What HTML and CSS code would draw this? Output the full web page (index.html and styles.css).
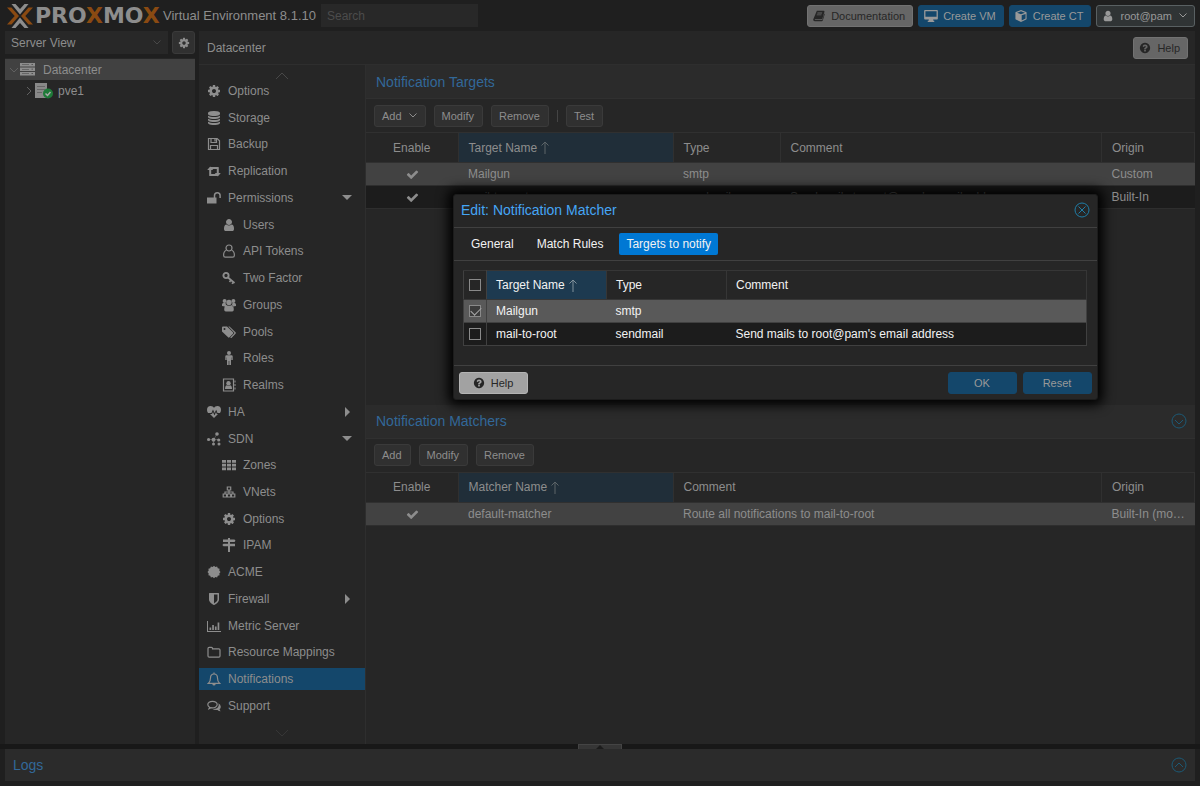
FILE: index.html
```html
<!DOCTYPE html>
<html lang="en">
<head>
    <meta charset="UTF-8">
    <meta name="viewport" content="width=device-width, initial-scale=1.0">
    <title>pve1 - Proxmox Virtual Environment</title>
    <link rel="stylesheet" href="styles.css">
</head>
<body>
    <svg class="sprite" aria-hidden="true">
        <symbol id="cog" viewBox="0 0 1792 1792"><path d="M1152 896q0-106-75-181t-181-75-181 75-75 181 75 181 181 75 181-75 75-181zm512-109v222q0 12-8 23t-20 13l-185 28q-19 54-39 91 35 50 107 138 10 12 10 25t-9 23q-27 37-99 108t-94 71q-12 0-26-9l-138-108q-44 23-91 38-16 136-29 186-7 28-36 28h-222q-14 0-24.5-8.5t-11.5-21.5l-28-184q-49-16-90-37l-141 107q-10 9-25 9-14 0-25-11-126-114-165-168-7-10-7-23 0-12 8-23 15-21 51-66.5t54-70.5q-27-50-41-99l-183-27q-13-2-21-12.5t-8-23.5v-222q0-12 8-23t19-13l186-28q14-46 39-92-40-57-107-138-10-12-10-24 0-10 9-23 26-36 98.5-107.5t94.5-71.5q13 0 26 10l138 107q44-23 91-38 16-136 29-186 7-28 36-28h222q14 0 24.5 8.5t11.5 21.5l28 184q49 16 90 37l142-107q9-9 24-9 13 0 25 10 129 119 165 170 7 8 7 22 0 12-8 23-15 21-51 66.5t-54 70.5q26 50 41 98l183 28q13 2 21 12.5t8 23.5z"/></symbol>
        <symbol id="check" viewBox="0 0 1792 1792"><path d="M1671 566q0 40-28 68l-724 724-136 136q-28 28-68 28t-68-28l-136-136-362-362q-28-28-28-68t28-68l136-136q28-28 68-28t68 28l294 295 656-657q28-28 68-28t68 28l136 136q28 28 28 68z"/></symbol>
        <symbol id="user" viewBox="0 0 1792 1792"><path d="M1536 1399q0 109-62.5 187t-150.5 78h-854q-88 0-150.5-78t-62.5-187q0-85 8.5-160.5t31.5-152 58.5-131 94-89 134.5-34.5q131 128 313 128t313-128q76 0 134.5 34.5t94 89 58.5 131 31.5 152 8.5 160.5zm-256-887q0 159-112.5 271.5t-271.5 112.5-271.5-112.5-112.5-271.5 112.5-271.5 271.5-112.5 271.5 112.5 112.5 271.5z"/></symbol>
        <symbol id="user-o" viewBox="0 0 14 14"><g fill="none" stroke="currentColor" stroke-width="1.2"><circle cx="7" cy="4" r="3"/><path d="M4.4 6.2C2.4 6.8 1.6 9 1.6 11.2c0 1.3.7 2 1.7 2h7.4c1 0 1.7-.7 1.7-2 0-2.200-.8-4.400-2.800-5"/></g></symbol>
        <symbol id="database" viewBox="0 0 1792 1792"><path d="M896 768q237 0 443-43t325-127v170q0 69-103 128t-280 93.500-385 34.500-385-34.500-280-93.500-103-128v-170q119 84 325 127t443 43zm0 768q237 0 443-43t325-127v170q0 69-103 128t-280 93.500-385 34.500-385-34.500-280-93.500-103-128v-170q119 84 325 127t443 43zm0-384q237 0 443-43t325-127v170q0 69-103 128t-280 93.500-385 34.500-385-34.500-280-93.500-103-128v-170q119 84 325 127t443 43zm0-1152q208 0 385 34.500t280 93.500 103 128v128q0 69-103 128t-280 93.500-385 34.500-385-34.500-280-93.500-103-128v-128q0-69 103-128t280-93.500 385-34.500z"/></symbol>
        <symbol id="shield" viewBox="0 0 1792 1792"><path d="M1344 960v-640h-448v1137q119-63 213-137 235-184 235-360zm192-768v768q0 86-33.500 170.500t-83 150-118 127.500-126.500 103-121 77.500-89.500 49.500-42.500 20q-12 6-26 6t-26-6q-16-7-42.500-20t-89.500-49.500-121-77.500-126.500-103-118-127.500-83-150-33.500-170.500v-768q0-26 19-45t45-19h1152q26 0 45 19t19 45z"/></symbol>
        <symbol id="help" viewBox="0 0 1792 1792"><path d="M1024 1376v-192q0-14-9-23t-23-9h-192q-14 0-23 9t-9 23v192q0 14 9 23t23 9h192q14 0 23-9t9-23zm256-672q0-88-55.500-163t-138.500-116-170-41q-243 0-371 213-15 24 8 42l132 100q7 6 19 6 16 0 25-12 53-68 86-92 34-24 86-24 48 0 85.500 26t37.500 59q0 38-20 61t-68 45q-63 28-115.500 86.500t-52.500 125.500v36q0 14 9 23t23 9h192q14 0 23-9t9-23q0-19 21.500-49.500t54.500-49.500q32-18 49-28.500t46-35 44.500-48 28-60.500 12.500-81zm384 192q0 209-103 385.500t-279.500 279.500-385.500 103-385.500-103-279.500-279.500-103-385.500 103-385.500 279.500-279.500 385.500-103 385.500 103 279.500 279.500 103 385.500z"/></symbol>
        <symbol id="save" viewBox="0 0 14 14"><path fill="none" stroke="currentColor" stroke-width="1.200" d="M1.500 1.500h8.700l2.300 2.300v8.700h-11zM4 1.500v4h5.500v-4M3.500 12.500v-4h7v4M8 2v2.500"/></symbol>
        <symbol id="retweet" viewBox="0 0 14 14"><path d="M3.200 2.500 6.200 6H4.200v4h4.600l1.600 2H2.700q-.5 0-.5-.5V6h-2zM10.800 12.500 7.800 9h2V5H5.200L3.600 3h7.700q.5 0 .5.500V9h2z"/></symbol>
        <symbol id="unlock" viewBox="0 0 14 14"><path d="M0 6.500h9.500v6H0z"/><path fill="none" stroke="currentColor" stroke-width="1.500" d="M7.500 7V4.500a2.800 2.800 0 0 1 5.600 0V7"/></symbol>
        <symbol id="key" viewBox="0 0 14 14"><circle cx="4" cy="4.500" r="2.600" fill="none" stroke="currentColor" stroke-width="1.900"/><path fill="none" stroke="currentColor" stroke-width="1.700" d="m6 6.500 6.500 5.500M9 9 7.500 11M11.500 11 10 12.800"/></symbol>
        <symbol id="group" viewBox="0 0 14 14"><circle cx="2.600" cy="3" r="2"/><circle cx="11.400" cy="3" r="2"/><circle cx="7" cy="4.500" r="2.700"/><path d="M0 8V6.500Q0 5 1.400 5h2.200q0 1.700 1 2.500L3 8.500zM14 8V6.500Q14 5 12.600 5h-2.200q0 1.700-1 2.500l1.600 1zM2.200 11.500q0-4.300 2.600-4.300 2.200 1.300 4.400 0 2.600 0 2.600 4.300 0 2-1.500 2H3.700q-1.500 0-1.500-2z"/></symbol>
        <symbol id="tags" viewBox="0 0 14 14"><path fill-rule="evenodd" d="M0 2.500Q0 1.500 1 1.500h4l6 5.800q.7.700 0 1.400l-3.500 3.600q-.7.700-1.400 0L0 6.500zM2.500 3a1 1 0 1 0 0 2 1 1 0 0 0 0-2z"/><path d="M6.300 1.500h1.200l6 5.800q.7.700 0 1.400l-3.800 4q-.8.600-1.500-.2l3.900-4.100q.4-.4 0-.8z"/></symbol>
        <symbol id="male" viewBox="0 0 14 14"><circle cx="7" cy="2" r="2"/><path d="M4.500 4.300h5q1.200 0 1.200 1.200V9H9.300V6.500H9V14H7.300v-4h-.6v4H5V6.500h-.3V9H3.300V5.500q0-1.200 1.200-1.200z"/></symbol>
        <symbol id="address" viewBox="0 0 14 14"><path fill="none" stroke="currentColor" stroke-width="1.200" d="M1.500 1h10v12h-10z"/><path d="M12.500 2.500h1v2h-1zM12.500 6h1v2h-1zM12.500 9.500h1v2h-1zM3 11q0-3.800 2-3.800 1.500 1 3 0 2 0 2 3.800z"/><circle cx="6.500" cy="5.300" r="2.200"/></symbol>
        <symbol id="heartbeat" viewBox="0 0 14 14"><path d="M7 13 3 9h2l1-2 1.500 3.500L9 7l.8 2H11zM0 5q0-4 3.700-4Q6 1 7 2.800 8 1 10.300 1 14 1 14 5q0 1.500-1 3h-2.500L9.200 4.700 7.500 8 6 4.500 4.400 8H1Q0 6.500 0 5z"/></symbol>
        <symbol id="sdn" viewBox="0 0 14 14"><circle cx="1.600" cy="7.500" r="1.600"/><circle cx="6.500" cy="7.700" r="2"/><circle cx="10" cy="2" r="1.800"/><circle cx="11.700" cy="8" r="1.600"/><circle cx="6.500" cy="12" r="1.500"/><circle cx="12" cy="12" r="1.500"/><path fill="none" stroke="currentColor" stroke-width=".4" d="M1.600 7.500h10M6.500 7.700 10 2M6.500 7.700V12"/></symbol>
        <symbol id="th" viewBox="0 0 14 14"><path d="M0 2h4v2.800H0zM5 2h4v2.800H5zM10 2h4v2.800h-4zM0 5.700h4v2.800H0zM5 5.700h4v2.800H5zM10 5.700h4v2.800h-4zM0 9.400h4v2.800H0zM5 9.400h4v2.800H5zM10 9.400h4v2.800h-4z"/></symbol>
        <symbol id="sitemap" viewBox="0 0 14 14"><path fill="none" stroke="currentColor" stroke-width="1.200" d="M5.300 2h3.400v3H5.300zM1.200 9h3.400v3H1.200zM9.400 9h3.400v3H9.400zM5.300 9h3.400v3H5.300zM7 5v4M3 9V7h8v2"/></symbol>
        <symbol id="signs" viewBox="0 0 14 14"><path d="M6 0h2v1.500h4.500l1 1.200-1 1.300H8v1.700h5V8.300H8V14H6V8.300H1.500L.3 7l1.200-1.300H6V4H1V1.500h5z"/></symbol>
        <symbol id="certificate" viewBox="0 0 14 14"><path d="m7 .8 1.300 1.300 1.800-.6.700 1.700 1.800.5-.3 1.900L13.500 7l-1.200 1.400.3 1.900-1.800.5-.7 1.700-1.800-.6L7 13.200l-1.300-1.300-1.800.6-.7-1.700-1.800-.5.300-1.900L.5 7l1.200-1.400-.3-1.900 1.800-.5.700-1.700 1.800.6z"/></symbol>
        <symbol id="chart" viewBox="0 0 14 12"><path d="M0 1h1v10h13v1H0zM2.500 7.500h1.700V10H2.500zM5.200 5h1.700v5H5.200zM7.900 6.500h1.700V10H7.900zM10.600 2.500h1.700V10h-1.700z"/></symbol>
        <symbol id="folder" viewBox="0 0 14 14"><path fill="none" stroke="currentColor" stroke-width="1.200" d="M1 11V3.500Q1 2.300 2.200 2.300h2.300q1 0 1 1v.5h6.300q1.200 0 1.200 1.200v6q0 1.200-1.200 1.200H2.200Q1 12.200 1 11z"/></symbol>
        <symbol id="bell" viewBox="0 0 14 14"><path fill="none" stroke="currentColor" stroke-width="1.200" d="M7 .5v1M1.500 11.300Q3.500 9.500 3.500 6 3.500 2 7 2t3.500 4q0 3.500 2 5.300z"/><path d="M5.300 12h3.400Q8.500 13.500 7 13.500T5.300 12z"/></symbol>
        <symbol id="comments" viewBox="0 0 14 14"><path fill="none" stroke="currentColor" stroke-width="1.200" d="M5.500 2.300C2.800 2.300.8 3.700.8 5.600c0 1.100.7 2 1.800 2.600l-.6 1.600 2-1.100c3.300.7 6.200-.8 6.200-3.100 0-1.900-2-3.300-4.700-3.300z"/><path d="M11.200 4.200q2.600 1.200 2.600 3.500 0 1.500-1.300 2.500.2 1 1.200 2-2 0-3.200-1.300-3 .5-5-1 5.500.2 6.200-3.500 0-1.200-.5-2.200z"/></symbol>
        <symbol id="book" viewBox="0 0 14 14"><path fill-rule="evenodd" d="M4.500 1h8q1.200 0 .8 1.200l-2.200 7.500q-.3 1-1.300 1H2.500q-.7 0-.5.600.1.500 1 .5h7.800l2.500-7.800.5.800-2.300 7.300q-.3 1-1.300 1H2q-1.800 0-1.800-2zM5.200 3 5 4h5.500l.3-1zM4.500 5.200l-.3 1h5.500l.3-1z"/></symbol>
        <symbol id="desktop" viewBox="0 0 16 14"><path fill-rule="evenodd" d="M1 0h14q1 0 1 1v9q0 1-1 1h-4.500l.3 1.500h1V14H4.200v-1.500h1L5.500 11H1q-1 0-1-1V1q0-1 1-1zm.5 1.500V8h13V1.500z"/></symbol>
        <symbol id="cube" viewBox="0 0 14 14"><path fill-rule="evenodd" d="m7 0 6 2.300q.5.200.5.800v7q0 .6-.5.900L7 14l-6-3q-.5-.3-.5-.9v-7q0-.6.500-.8zM7 1.600 2.400 3.300 7 5l4.600-1.700zM7.800 6.200v6l4.500-2.300V4.600z"/></symbol>
        <symbol id="down" viewBox="0 0 14 8"><path fill="none" stroke="currentColor" d="m1 1 6 6 6-6"/></symbol>
        <symbol id="caret" viewBox="0 0 8 5"><path fill="none" stroke="currentColor" d="m.5.5 3.500 3.500L7.500.5"/></symbol>
        <symbol id="up" viewBox="0 0 14 8"><path fill="none" stroke="currentColor" d="m1 7 6-6 6 6"/></symbol>
        <symbol id="sort" viewBox="0 0 8 14"><path fill="none" stroke="currentColor" d="M4 13V1M.5 4.500 4 1l3.500 3.500"/></symbol>
        <symbol id="circle-down" viewBox="0 0 16 16"><g fill="none" stroke="currentColor"><circle cx="8" cy="8" r="7"/><path d="m4 7 4 4 4-4"/></g></symbol>
        <symbol id="circle-up" viewBox="0 0 16 16"><g fill="none" stroke="currentColor"><circle cx="8" cy="8" r="7"/><path d="m4 10 4-4 4 4"/></g></symbol>
        <symbol id="circle-x" viewBox="0 0 16 16"><g fill="none" stroke="currentColor"><circle cx="8" cy="8" r="7"/><path d="m4.500 4.500 7 7m0-7-7 7"/></g></symbol>
        <symbol id="server" viewBox="0 0 15 13"><path fill-rule="evenodd" d="M0 0h15v3.500H0zM0 4.500h15V8H0zM0 9h15v3.500H0zM2 1.500v.5h7v-.5zM2 6v.5h7V6zM2 10.500v.5h7v-.5zM11.500 1.300v.8H13v-.8zM11.500 5.800v.8H13v-.8zM11.500 10.300v.8H13v-.8z"/></symbol>
    </svg>

    <header class="topbar">
        <svg class="logo" viewBox="0 0 26 24">
            <path class="logo-light" d="M4.500 0h4L13 5l4.500-5h4L15 8l-2 2.500L11 8zM4.500 24h4l4.500-5 4.500 5h4L15 16l-2-2.500-2 2.500z"/>
            <path class="logo-orange" d="M0 3.500h4.500L12 12l-7.500 8.500H0L7.700 12zM26 3.500h-4.500L14 12l7.500 8.500H26L18.300 12z"/>
        </svg>
        <div class="brand">PRO<span>X</span>MO<span>X</span></div>
        <div class="version">Virtual Environment 8.1.10</div>
        <input class="search" type="text" placeholder="Search" aria-label="Search">
        <div class="top-actions">
            <button class="btn light"><svg class="icon"><use href="#book"/></svg>Documentation</button>
            <button class="btn primary"><svg class="icon wide"><use href="#desktop"/></svg>Create VM</button>
            <button class="btn primary"><svg class="icon"><use href="#cube"/></svg>Create CT</button>
            <button class="btn account"><svg class="icon"><use href="#user"/></svg>root@pam<svg class="caret"><use href="#caret"/></svg></button>
        </div>
    </header>

    <div class="workspace">
        <aside class="sidebar">
            <div class="view-picker">
                <div class="select-wrap">
                    <select aria-label="View">
                        <option>Server View</option>
                    </select>
                    <svg class="caret"><use href="#caret"/></svg>
                </div>
                <button class="btn gear" aria-label="Settings"><svg class="icon"><use href="#cog"/></svg></button>
            </div>
            <div class="tree">
                <div class="tree-row selected">
                    <svg class="expander" viewBox="0 0 8 8"><path d="m0 2 4 4 4-4"/></svg>
                    <svg class="tree-icon"><use href="#server"/></svg>
                    <span>Datacenter</span>
                </div>
                <div class="tree-row child">
                    <svg class="expander" viewBox="0 0 8 8"><path d="m2 0 4 4-4 4"/></svg>
                    <svg class="node-icon" viewBox="0 0 18 16">
                        <path fill="#888" d="M0 0h12v15H0z"/>
                        <path stroke="#666" d="M2 3.500h8M2 6.500h8M2 9.500h5"/>
                        <circle cx="13" cy="10.500" r="5" fill="#1e7a38"/>
                        <path fill="none" stroke="#aaa" stroke-width="1.500" d="m10.500 10.500 2 2 3-3.500"/>
                    </svg>
                    <span>pve1</span>
                </div>
            </div>
        </aside>

        <main class="center">
            <div class="center-head">
                <span>Datacenter</span>
                <button class="btn light"><svg class="icon"><use href="#help"/></svg>Help</button>
            </div>
            <div class="center-body">
                <div class="nav-wrap">
                    <svg class="scroller"><use href="#up"/></svg>
                    <nav class="nav">
                        <a href="#"><svg class="icon"><use href="#cog"/></svg>Options</a>
                        <a href="#"><svg class="icon"><use href="#database"/></svg>Storage</a>
                        <a href="#"><svg class="icon"><use href="#save"/></svg>Backup</a>
                        <a href="#"><svg class="icon"><use href="#retweet"/></svg>Replication</a>
                        <a href="#" class="open"><svg class="icon"><use href="#unlock"/></svg>Permissions</a>
                        <a href="#" class="sub"><svg class="icon"><use href="#user"/></svg>Users</a>
                        <a href="#" class="sub"><svg class="icon"><use href="#user-o"/></svg>API Tokens</a>
                        <a href="#" class="sub"><svg class="icon"><use href="#key"/></svg>Two Factor</a>
                        <a href="#" class="sub"><svg class="icon"><use href="#group"/></svg>Groups</a>
                        <a href="#" class="sub"><svg class="icon"><use href="#tags"/></svg>Pools</a>
                        <a href="#" class="sub"><svg class="icon"><use href="#male"/></svg>Roles</a>
                        <a href="#" class="sub"><svg class="icon"><use href="#address"/></svg>Realms</a>
                        <a href="#" class="closed"><svg class="icon"><use href="#heartbeat"/></svg>HA</a>
                        <a href="#" class="open"><svg class="icon"><use href="#sdn"/></svg>SDN</a>
                        <a href="#" class="sub"><svg class="icon"><use href="#th"/></svg>Zones</a>
                        <a href="#" class="sub"><svg class="icon"><use href="#sitemap"/></svg>VNets</a>
                        <a href="#" class="sub"><svg class="icon"><use href="#cog"/></svg>Options</a>
                        <a href="#" class="sub"><svg class="icon"><use href="#signs"/></svg>IPAM</a>
                        <a href="#"><svg class="icon"><use href="#certificate"/></svg>ACME</a>
                        <a href="#" class="closed"><svg class="icon"><use href="#shield"/></svg>Firewall</a>
                        <a href="#"><svg class="icon"><use href="#chart"/></svg>Metric Server</a>
                        <a href="#"><svg class="icon"><use href="#folder"/></svg>Resource Mappings</a>
                        <a href="#" class="active"><svg class="icon"><use href="#bell"/></svg>Notifications</a>
                        <a href="#"><svg class="icon"><use href="#comments"/></svg>Support</a>
                    </nav>
                    <svg class="scroller faint"><use href="#down"/></svg>
                </div>

                <div class="content">
                    <section class="panel">
                        <h2>Notification Targets</h2>
                        <div class="toolbar">
                            <button class="btn">Add<svg class="caret"><use href="#caret"/></svg></button>
                            <button class="btn">Modify</button>
                            <button class="btn">Remove</button>
                            <span class="separator"></span>
                            <button class="btn">Test</button>
                        </div>
                        <table class="grid">
                            <colgroup>
                                <col class="col-enable"><col class="col-name"><col class="col-type"><col><col class="col-origin">
                            </colgroup>
                            <thead>
                                <tr><th class="center-cell">Enable</th><th class="sorted">Target Name<svg class="sort"><use href="#sort"/></svg></th><th>Type</th><th>Comment</th><th>Origin</th></tr>
                            </thead>
                            <tbody>
                                <tr class="selected"><td class="center-cell"><svg class="icon"><use href="#check"/></svg></td><td>Mailgun</td><td>smtp</td><td></td><td>Custom</td></tr>
                                <tr><td class="center-cell"><svg class="icon"><use href="#check"/></svg></td><td>mail-to-root</td><td>sendmail</td><td>Send mails to root@pam's email address</td><td>Built-In</td></tr>
                            </tbody>
                        </table>
                    </section>

                    <section class="panel">
                        <h2>Notification Matchers<svg class="tool"><use href="#circle-down"/></svg></h2>
                        <div class="toolbar">
                            <button class="btn">Add</button>
                            <button class="btn">Modify</button>
                            <button class="btn">Remove</button>
                        </div>
                        <table class="grid">
                            <colgroup>
                                <col class="col-enable"><col class="col-name"><col><col class="col-origin">
                            </colgroup>
                            <thead>
                                <tr><th class="center-cell">Enable</th><th class="sorted">Matcher Name<svg class="sort"><use href="#sort"/></svg></th><th>Comment</th><th>Origin</th></tr>
                            </thead>
                            <tbody>
                                <tr class="selected"><td class="center-cell"><svg class="icon"><use href="#check"/></svg></td><td>default-matcher</td><td>Route all notifications to mail-to-root</td><td>Built-In (modified)</td></tr>
                            </tbody>
                        </table>
                    </section>
                </div>
            </div>
        </main>
    </div>

    <div class="splitter"><div class="handle"><svg class="caret" viewBox="0 0 8 5"><path d="M4 0 8 4H0z"/></svg></div></div>
    <footer class="logs">Logs<svg class="tool"><use href="#circle-up"/></svg></footer>

    <div class="dialog" role="dialog" aria-labelledby="dialog-title">
        <div class="dialog-title">
            <span id="dialog-title">Edit: Notification Matcher</span>
            <button class="close" aria-label="Close"><svg class="tool"><use href="#circle-x"/></svg></button>
        </div>
        <div class="tabs">
            <button>General</button>
            <button>Match Rules</button>
            <button class="active">Targets to notify</button>
        </div>
        <div class="dialog-body">
            <table class="grid">
                <colgroup>
                    <col class="col-check"><col class="col-target"><col class="col-target"><col>
                </colgroup>
                <thead>
                    <tr><th class="check-cell"><input type="checkbox" aria-label="Select all"></th><th class="sorted">Target Name<svg class="sort"><use href="#sort"/></svg></th><th>Type</th><th>Comment</th></tr>
                </thead>
                <tbody>
                    <tr class="selected"><td class="check-cell"><input type="checkbox" aria-label="Mailgun" checked></td><td>Mailgun</td><td>smtp</td><td></td></tr>
                    <tr><td class="check-cell"><input type="checkbox" aria-label="mail-to-root"></td><td>mail-to-root</td><td>sendmail</td><td>Send mails to root@pam's email address</td></tr>
                </tbody>
            </table>
        </div>
        <div class="dialog-foot">
            <button class="btn light"><svg class="icon"><use href="#help"/></svg>Help</button>
            <button class="btn primary">OK</button>
            <button class="btn primary">Reset</button>
        </div>
    </div>
</body>
</html>
```
FILE: styles.css
```css
* {
    box-sizing: border-box;
}

body {
    display: flex;
    flex-direction: column;
    min-height: 100vh;
    margin: 0;
    padding: 0 5px 5px;
    background: #1f1f1f;
    color: #8d8d8d;
    font: 12px/16px "Liberation Sans", Arial, sans-serif;
}

svg {
    fill: currentColor;
    flex: none;
}

.sprite {
    position: absolute;
    width: 0;
    height: 0;
}

.icon {
    width: 14px;
    height: 14px;
}

.caret {
    width: 8px;
    height: 5px;
}

.tool {
    width: 16px;
    height: 16px;
    color: #1c5975;
}

/* buttons */
.btn {
    display: flex;
    align-items: center;
    justify-content: center;
    height: 22px;
    padding: 0 8px 0 7px;
    border: 1px solid #3a3a3a;
    border-radius: 3px;
    background: #303030;
    color: #8d8d8d;
    font: 11px/16px "Liberation Sans", Arial, sans-serif;
}

.btn .icon {
    width: 12px;
    height: 12px;
    margin-right: 6px;
}

.btn .caret {
    margin-left: 7px;
}

.btn.light {
    border-color: #727272;
    background: #666;
    color: #262626;
}

.btn.primary {
    border-color: #14476b;
    background: #14476b;
    color: #999;
}

.btn.account {
    border-color: #596062;
    background: #303435;
    color: #999;
}

/* top bar */
.topbar {
    display: flex;
    align-items: center;
    height: 31px;
}

.logo {
    width: 26px;
    height: 24px;
    margin: 0 2px;
}

.logo-light {
    fill: #8d8d8d;
}

.logo-orange {
    fill: #8a4a12;
}

.brand {
    width: 126px;
    color: #8d8d8d;
    font: bold 22px/24px "DejaVu Sans", sans-serif;
}

.brand span {
    color: #8a4a12;
}

.version {
    margin: 0 5px 0 2px;
    font-size: 13px;
    white-space: nowrap;
}

.search {
    width: 157px;
    height: 23px;
    padding: 0 6px;
    border: 0;
    background: #282828;
    color: #8d8d8d;
    font: 12px/16px "Liberation Sans", Arial, sans-serif;
}

.search::placeholder {
    color: #4c4c4c;
}

.top-actions {
    display: flex;
    gap: 5px;
    margin-left: auto;
}

.top-actions .btn {
    padding: 0 7px 0 5px;
}

.top-actions .btn .icon.wide {
    width: 14px;
    margin-right: 5px;
}

/* resource tree */
.workspace {
    display: flex;
    flex: 1;
    gap: 4px;
}

.sidebar {
    display: flex;
    flex-direction: column;
    gap: 4px;
    width: 190px;
}

.view-picker {
    display: flex;
    gap: 4px;
}

.select-wrap {
    position: relative;
    flex: 1;
}

.select-wrap select {
    width: 100%;
    height: 23px;
    padding: 0 6px;
    border: 0;
    appearance: none;
    background: #282828;
    color: #8d8d8d;
    font: 12px/16px "Liberation Sans", Arial, sans-serif;
}

.select-wrap .caret {
    position: absolute;
    top: 9px;
    right: 7px;
    color: #484848;
}

.btn.gear {
    width: 23px;
    height: 23px;
    padding: 0;
}

.btn.gear .icon {
    margin: 0;
}

.tree {
    flex: 1;
    padding: 1px 0;
    background: #262626;
}

.tree-row {
    display: flex;
    align-items: center;
    height: 21px;
    padding-left: 5px;
}

.tree-row.selected {
    background: #414141;
}

.tree-row.child {
    padding-left: 20px;
}

.expander {
    width: 8px;
    height: 8px;
    margin-right: 2px;
    fill: none;
    stroke: #606060;
}

.tree-icon {
    width: 15px;
    height: 13px;
    margin-right: 8px;
}

.node-icon {
    width: 18px;
    height: 16px;
    margin-right: 5px;
}

/* center panel */
.center {
    display: flex;
    flex: 1;
    flex-direction: column;
    min-width: 0;
    background: #262626;
}

.center-head {
    display: flex;
    align-items: center;
    justify-content: space-between;
    height: 34px;
    padding: 0 7px 0 8px;
    border-bottom: 1px solid #2e2e2e;
}

.center-head .btn {
    padding: 0 7px 0 5px;
}

.center-body {
    display: flex;
    flex: 1;
}

.nav-wrap {
    display: flex;
    flex-direction: column;
    align-items: center;
    width: 167px;
    border-right: 1px solid #2e2e2e;
}

.scroller {
    width: 14px;
    height: 8px;
    margin: 7px 0 0;
    color: #484848;
}

.scroller.faint {
    margin: 12px 0 7px;
    color: #363636;
}

.nav {
    display: flex;
    flex: 1;
    flex-direction: column;
    justify-content: space-between;
    width: 100%;
}

.nav a {
    display: flex;
    align-items: center;
    gap: 7px;
    height: 22px;
    padding: 0 13px 0 8px;
    color: inherit;
    text-decoration: none;
}

.nav a.sub {
    padding-left: 23px;
}

.nav a.active {
    background: #14476b;
}

.nav .open::after,
.nav .closed::after {
    content: "";
    margin-left: auto;
    border: 5px solid transparent;
}

.nav .open::after {
    border-top-color: #8d8d8d;
    border-bottom: 0;
}

.nav .closed::after {
    margin-right: 2px;
    border-left-color: #8d8d8d;
    border-right: 0;
}

.content {
    display: flex;
    flex: 1;
    flex-direction: column;
    min-width: 0;
}

.panel {
    flex: 1;
}

.panel h2 {
    display: flex;
    align-items: center;
    justify-content: space-between;
    height: 34px;
    margin: 0;
    padding: 0 8px 0 10px;
    border-bottom: 1px solid #303030;
    background: #2b2b2b;
    color: #326899;
    font-size: 14px;
    font-weight: normal;
}

.toolbar {
    display: flex;
    align-items: center;
    gap: 8px;
    height: 33px;
    padding: 0 8px;
}

.separator {
    width: 1px;
    height: 12px;
    background: #444;
}

/* grids */
.grid {
    width: 100%;
    table-layout: fixed;
    border-collapse: collapse;
}

.grid th,
.grid td {
    padding: 0 9px;
    overflow: hidden;
    font-weight: normal;
    text-align: left;
    text-overflow: ellipsis;
    white-space: nowrap;
}

.panel .grid th,
.panel .grid td {
    padding-left: 10px;
}

.grid th {
    height: 29px;
    border: 1px solid #303030;
    border-left: 0;
}

.panel .grid th {
    height: 30px;
}

.grid td {
    height: 23px;
}

.grid tbody tr {
    border-bottom: 1px solid #2e2e2e;
    background: #1c1c1c;
}

.grid tbody tr.selected {
    background: #424242;
}

.grid .sorted {
    background: #202e39;
}

.grid .center-cell,
.grid .check-cell {
    padding: 0;
    text-align: center;
}

.panel .grid .center-cell {
    padding: 0;
}

.grid .icon {
    width: 13px;
    height: 13px;
    vertical-align: middle;
}

.sort {
    width: 8px;
    height: 14px;
    margin-left: 4px;
    color: #5c6468;
    vertical-align: middle;
}

.col-enable {
    width: 92px;
}

.col-name {
    width: 215px;
}

.col-type {
    width: 107px;
}

.col-origin {
    width: 93px;
}

.col-check {
    width: 23px;
}

.col-target {
    width: 120px;
}

/* bottom */
.splitter {
    display: flex;
    justify-content: center;
    height: 5px;
    margin: 0 -5px;
    background: #181818;
}

.handle {
    display: flex;
    justify-content: center;
    width: 44px;
    border: 1px solid #444;
    border-bottom: 0;
    background: #363636;
    color: #1c1c1c;
}

.logs {
    display: flex;
    align-items: center;
    justify-content: space-between;
    height: 32px;
    padding: 0 8px;
    background: #2b2b2b;
    color: #326899;
    font-size: 14px;
}

/* edit window floating over the page */
.dialog {
    position: absolute;
    top: 194px;
    left: 453px;
    width: 645px;
    border: 1px solid #1c1c1c;
    border-radius: 3px;
    background: #262626;
    box-shadow: 0 0 12px 5px #000;
    color: #f2f2f2;
}

.dialog-title {
    display: flex;
    align-items: center;
    justify-content: space-between;
    height: 32px;
    padding: 0 7px 2px;
    color: #45a5f5;
    font-size: 14px;
}

.close {
    display: flex;
    padding: 0;
    border: 0;
    background: none;
}

.close .tool {
    color: #1f7ea8;
}

.tabs {
    display: flex;
    align-items: center;
    gap: 9px;
    height: 34px;
    padding: 0 10px;
    border-top: 1px solid #404040;
    border-bottom: 1px solid #404040;
}

.tabs button {
    height: 22px;
    padding: 0 7px;
    border: 0;
    border-radius: 2px;
    background: none;
    color: #f2f2f2;
    font: 12px/16px "Liberation Sans", Arial, sans-serif;
}

.tabs .active {
    background: #0078d4;
}

.dialog-body {
    padding: 9px 10px 19px 9px;
}

.dialog .grid {
    border: 1px solid #404040;
}

.dialog .grid th {
    border-color: #363636;
}

.dialog .grid tbody tr {
    border-bottom-color: #404040;
}

.dialog .grid tbody tr.selected {
    background: #595959;
}

.dialog .grid .sorted {
    background: #1d3a50;
}

.dialog .grid .check-cell {
    border-right: 1px solid #404040;
}

.dialog .sort {
    color: #80909a;
}

.check-cell input {
    display: block;
    width: 12px;
    height: 12px;
    margin: 0 auto;
    border: 1px solid #8a8a8a;
    appearance: none;
}

.check-cell input:checked {
    background: #3c3c3c;
}

.check-cell input:checked::before {
    content: "";
    display: block;
    width: 9px;
    height: 5px;
    margin: 1px 0 0 1px;
    border: solid #aaa;
    border-width: 0 0 1px 1px;
    transform: rotate(-45deg);
}

.dialog-foot {
    display: flex;
    align-items: center;
    gap: 6px;
    height: 34px;
    padding: 0 5px;
    border-top: 1px solid #404040;
}

.dialog-foot .btn {
    width: 69px;
}

.dialog-foot .light {
    margin-right: auto;
    border-color: #b4b4b4;
    background: #a2a2a2;
}
```
